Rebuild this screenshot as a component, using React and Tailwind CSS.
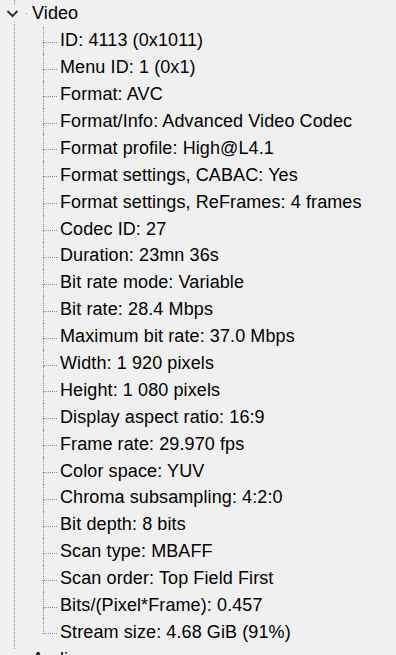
import React from 'react';

const fields = [
    'ID: 4113 (0x1011)',
    'Menu ID: 1 (0x1)',
    'Format: AVC',
    'Format/Info: Advanced Video Codec',
    'Format profile: High@L4.1',
    'Format settings, CABAC: Yes',
    'Format settings, ReFrames: 4 frames',
    'Codec ID: 27',
    'Duration: 23mn 36s',
    'Bit rate mode: Variable',
    'Bit rate: 28.4 Mbps',
    'Maximum bit rate: 37.0 Mbps',
    'Width: 1 920 pixels',
    'Height: 1 080 pixels',
    'Display aspect ratio: 16:9',
    'Frame rate: 29.970 fps',
    'Color space: YUV',
    'Chroma subsampling: 4:2:0',
    'Bit depth: 8 bits',
    'Scan type: MBAFF',
    'Scan order: Top Field First',
    'Bits/(Pixel*Frame): 0.457',
    'Stream size: 4.68 GiB (91%)',
];

const Chevron = () => (
    <div className="-ml-[9px] w-[17px] h-[17px] bg-[#f0f0f0] flex items-center justify-center shrink-0">
        <svg width="17" height="17" viewBox="0 0 17 17">
            <path d="M1.5 6 L6.5 11 L11.5 6" fill="none" stroke="#333" strokeWidth="2" />
        </svg>
    </div>
);

// one property line, with its own piece of the tree lines
const Child = ({ text, last }) => (
    <div className="flex h-[26.9px]">
        <div className="w-[14px] flex flex-col shrink-0">
            <div className="h-[16px] border-l border-b border-dotted border-[#8c8c8c]" />
            <div className={`flex-1 ${last ? '' : 'border-l border-dotted border-[#8c8c8c]'}`} />
        </div>
        <span className="ml-[3px] self-center whitespace-nowrap leading-none tracking-[0.1px]">{text}</span>
    </div>
);

export default function App() {
    return (
        <div
            className="h-[655px] w-[396px] overflow-hidden bg-[#f0f0f0] text-black text-[18px]"
            style={{ fontFamily: '"Liberation Sans", Arial, sans-serif' }}
        >
            <div className="ml-[14px] h-full border-l border-dotted border-[#8c8c8c]">
                <div className="flex items-center h-[26.9px]">
                    <Chevron />
                    <span className="ml-[3px] w-[1px] h-[1px] bg-[#8c8c8c]" />
                    <span className="ml-[5px] leading-none tracking-[0.1px]">Video</span>
                </div>
                <div className="ml-[28px]">
                    {fields.map((f, i) => (
                        <Child key={f} text={f} last={i === fields.length - 1} />
                    ))}
                </div>
                <div className="flex items-center h-[26.9px]">
                    <div className="-ml-[9px] w-[17px] h-[17px] bg-[#f0f0f0] shrink-0" />
                    <span className="ml-[9px] leading-none">Audio</span>
                </div>
            </div>
        </div>
    );
}
